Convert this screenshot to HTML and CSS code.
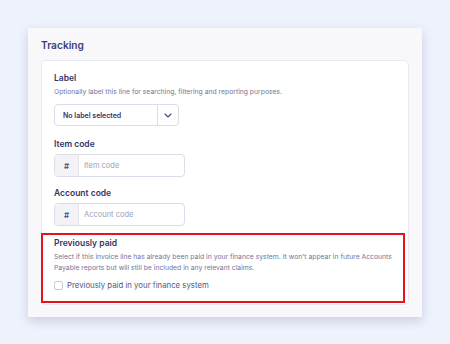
FILE: index.html
```html
<!DOCTYPE html>
<html>
<head>
<meta charset="utf-8">
<link rel="stylesheet" href="styles.css">
</head>
<body>
<div class="panel">
  <h2 class="panel-title">Tracking</h2>
  <div class="card">
    <div class="field field-label">
      <div class="field-name">Label</div>
      <div class="field-help">Optionally label this line for searching, filtering and reporting purposes.</div>
      <div class="select">
        <span class="select-value">No label selected</span>
        <span class="select-btn">
          <svg width="8" height="5" viewBox="0 0 8 5"><path d="M1 1l3 3 3-3" fill="none" stroke="#4a4c7a" stroke-width="1.1" stroke-linecap="round" stroke-linejoin="round"/></svg>
        </span>
      </div>
    </div>
    <div class="field">
      <div class="field-name">Item code</div>
      <div class="input">
        <span class="addon">#</span>
        <span class="placeholder">Item code</span>
      </div>
    </div>
    <div class="field field-last">
      <div class="field-name">Account code</div>
      <div class="input">
        <span class="addon">#</span>
        <span class="placeholder">Account code</span>
      </div>
    </div>
    <div class="highlight">
      <div class="field-name">Previously paid</div>
      <div class="field-help">Select if this invoice line has already been paid in your finance system. It won't appear in future Accounts Payable reports but will still be included in any relevant claims.</div>
      <label class="check">
        <span class="box"></span>
        <span class="check-text">Previously paid in your finance system</span>
      </label>
    </div>
  </div>
</div>
</body>
</html>
```
FILE: styles.css
```css
* { box-sizing: border-box; }
html, body { margin: 0; padding: 0; }
body {
  background: #eef2fc;
  font-family: Inter, "Noto Sans", sans-serif;
  width: 450px;
  height: 344px;
  padding: 28px 28px 0 28px;
}
.panel {
  width: 394px;
  background: #f8f8fb;
  padding: 9px 13px 12px 13px;
  box-shadow: 0 4px 10px rgba(40, 50, 110, 0.18);
}
.panel-title {
  margin: 0;
  font-size: 10.2px;
  line-height: 16px;
  font-weight: 600;
  color: #3c3f78;
  height: 23px;
}
.card {
  background: #fff;
  border: 1px solid #e9eaf1;
  border-radius: 5px;
  padding: 11px 4px 1px 12px;
}
.field { margin-bottom: 10px; }
.field-last { margin-bottom: 7px; }
.field-name {
  font-size: 8.5px;
  line-height: 12px;
  font-weight: 600;
  color: #32346a;
}
.field-help {
  font-size: 6.8px;
  line-height: 11px;
  color: #73759c;
  margin-top: 2px;
}
.field-label .field-help { margin-bottom: 7px; }
.select {
  display: flex;
  width: 125px;
  height: 22px;
  border: 1px solid #dcdde8;
  border-radius: 4px;
}
.select-value {
  flex: 1;
  display: flex;
  align-items: center;
  padding-left: 8px;
  font-size: 7px;
  font-weight: 600;
  color: #32346a;
}
.select-btn {
  width: 21px;
  display: flex;
  align-items: center;
  justify-content: center;
  border-left: 1px solid #dcdde8;
}
.field + .field .field-name { margin-bottom: 4px; }
.field-label + .field { margin-top: 12px; }
.input {
  display: flex;
  width: 131px;
  height: 23px;
  border: 1px solid #dcdde8;
  border-radius: 4px;
  overflow: hidden;
}
.addon {
  width: 24px;
  background: #f3f3f7;
  display: flex;
  align-items: center;
  justify-content: center;
  font-size: 8px;
  font-weight: 600;
  color: #4a4c7a;
  border-right: 1px solid #e3e4ec;
}
.placeholder {
  display: flex;
  align-items: center;
  padding-left: 5px;
  font-size: 7.5px;
  color: #9c9eb8;
}
.highlight {
  margin: 0 -1px 0 -13px;
  border: 2px solid #e3141b;
  padding: 2px 4px 11px 11px;
}
.check {
  display: flex;
  align-items: center;
  margin-top: 7px;
}
.box {
  width: 9px;
  height: 9px;
  border: 1px solid #c9cad8;
  border-radius: 2px;
  background: #fff;
  margin-right: 4px;
}
.check-text {
  font-size: 7.8px;
  color: #55577f;
}
```
